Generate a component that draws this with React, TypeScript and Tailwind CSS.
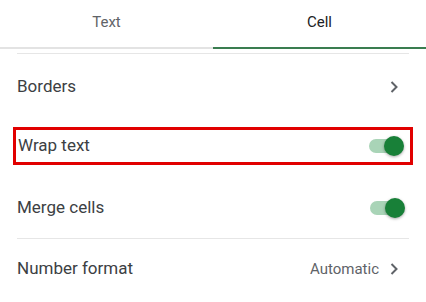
import React, { useState } from 'react';

const Chevron: React.FC = () => (
  <svg width="10" height="14" viewBox="0 0 10 14" className="text-[#5f6368]">
    <path d="M2.5 2 L7.5 7 L2.5 12" fill="none" stroke="currentColor" strokeWidth="2" />
  </svg>
);

const Toggle: React.FC<{ on: boolean; onClick: () => void }> = ({ on, onClick }) => (
  <button onClick={onClick} className="relative w-[36px] h-[22px] flex items-center">
    <span className={`absolute left-[1px] right-[1px] h-[14px] rounded-full ${on ? 'bg-[#a9d4b7]' : 'bg-[#bdc1c6]'}`} />
    <span
      className={`absolute w-[20px] h-[20px] rounded-full shadow-[0_1px_3px_rgba(0,0,0,0.35)] ${on ? 'right-0 bg-[#188038]' : 'left-0 bg-[#f1f3f4]'}`}
    />
  </button>
);

export default function App() {
  const [tab, setTab] = useState<'TEXT' | 'CELL'>('CELL');
  const [wrap, setWrap] = useState(true);
  const [merge, setMerge] = useState(true);

  return (
    <div className="w-[426px] h-[302px] bg-white font-['Roboto','Liberation_Sans',sans-serif] text-[17px] text-[#3c4043] overflow-hidden">
      <div className="flex h-[49px] border-b-2 border-[#e3e3e3]">
        <button
          onClick={() => setTab('TEXT')}
          className={`flex-1 -mb-[2px] pb-[2px] border-b-2 text-[15px] ${tab === 'TEXT' ? 'border-[#3a7d50] text-[#202124]' : 'border-transparent text-[#5f6368]'}`}
        >
          Text
        </button>
        <button
          onClick={() => setTab('CELL')}
          className={`flex-1 -mb-[2px] pb-[2px] border-b-2 text-[15px] ${tab === 'CELL' ? 'border-[#3a7d50] text-[#202124]' : 'border-transparent text-[#5f6368]'}`}
        >
          Cell
        </button>
      </div>

      <div className="mx-[17px] mt-[4px] border-t border-[#e6e6e6]" />

      <div className="px-[17px]">
        <div className="flex items-center justify-between h-[66px] pr-[10px]">
          <span>Borders</span>
          <Chevron />
        </div>

        <div className="-mx-[4px] mt-[7px] h-[38px] border-[3px] border-[#e10000] flex items-center justify-between pl-[2px] pr-[6px]">
          <span>Wrap text</span>
          <Toggle on={wrap} onClick={() => setWrap(v => !v)} />
        </div>

        <div className="flex items-center justify-between h-[44px] mt-[21px] mb-[8px] pr-[4px]">
          <span>Merge cells</span>
          <Toggle on={merge} onClick={() => setMerge(v => !v)} />
        </div>

        <div className="border-t border-[#e6e6e6]" />

        <div className="flex items-center justify-between h-[60px] pr-[10px]">
          <span>Number format</span>
          <span className="flex items-center gap-[10px] text-[15px] text-[#5f6368]">
            Automatic
            <Chevron />
          </span>
        </div>
      </div>
    </div>
  );
}
